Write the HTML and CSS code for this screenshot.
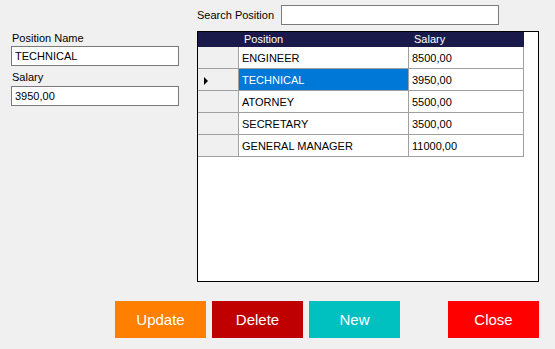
FILE: index.html
```html
<!DOCTYPE html>
<html lang="en">
<head>
  <meta charset="UTF-8">
  <title>Positions</title>
  <link rel="stylesheet" href="styles.css">
</head>
<body>
  <div class="main">
    <div class="edit-panel">
      <label class="field-label">Position Name</label>
      <input class="field" type="text" value="TECHNICAL">
      <label class="field-label">Salary</label>
      <input class="field" type="text" value="3950,00">
    </div>

    <div class="list-panel">
      <div class="search-row">
        <label class="search-label">Search Position</label>
        <input class="search-box" type="text">
      </div>

      <div class="grid">
        <table class="grid-table">
          <thead>
            <tr>
              <th class="row-head"></th>
              <th class="col-pos">Position</th>
              <th class="col-sal">Salary</th>
            </tr>
          </thead>
          <tbody>
            <tr>
              <td class="row-head"></td>
              <td>ENGINEER</td>
              <td>8500,00</td>
            </tr>
            <tr>
              <td class="row-head"><span class="arrow"></span></td>
              <td class="selected">TECHNICAL</td>
              <td>3950,00</td>
            </tr>
            <tr>
              <td class="row-head"></td>
              <td>ATORNEY</td>
              <td>5500,00</td>
            </tr>
            <tr>
              <td class="row-head"></td>
              <td>SECRETARY</td>
              <td>3500,00</td>
            </tr>
            <tr>
              <td class="row-head"></td>
              <td>GENERAL MANAGER</td>
              <td>11000,00</td>
            </tr>
          </tbody>
        </table>
      </div>
    </div>
  </div>

  <div class="buttons">
    <button class="btn btn-update">Update</button>
    <button class="btn btn-delete">Delete</button>
    <button class="btn btn-new">New</button>
    <button class="btn btn-close">Close</button>
  </div>
</body>
</html>
```

FILE: styles.css
```css
body {
  margin: 0;
  width: 555px;
  height: 349px;
  background: #f0f0f0;
  font-family: 'Liberation Sans', Arial, sans-serif;
  font-size: 11px;
  color: #000000;
  overflow: hidden;
}

.main {
  display: flex;
}

.edit-panel {
  display: flex;
  flex-direction: column;
  width: 168px;
  margin-left: 11px;
  padding-top: 31px;
}

.field-label {
  height: 14px;
  line-height: 14px;
  padding-left: 1px;
}

.field {
  box-sizing: border-box;
  width: 168px;
  height: 20px;
  margin: 1px 0 6px 0;
  padding: 0 3px;
  border: 1px solid #7a7a7a;
  background: #ffffff;
  font-family: inherit;
  font-size: 11px;
}

.field + .field-label {
  margin-top: -2px;
  margin-bottom: 1px;
}

.list-panel {
  margin-left: 18px;
  padding-top: 5px;
}

.search-row {
  display: flex;
  align-items: center;
  height: 20px;
}

.search-label {
  width: 84px;
}

.search-box {
  box-sizing: border-box;
  width: 218px;
  height: 20px;
  margin: 0;
  border: 1px solid #7a7a7a;
  background: #ffffff;
}

.grid {
  box-sizing: border-box;
  width: 342px;
  height: 251px;
  margin-top: 6px;
  border: 1px solid #000000;
  background: #ffffff;
}

.grid-table {
  border-collapse: separate;
  border-spacing: 0;
  table-layout: fixed;
  width: 326px;
}

.grid-table th {
  height: 15px;
  padding: 0 5px;
  background: #191a4a;
  color: #ffffff;
  font-weight: normal;
  text-align: left;
  line-height: 15px;
}

.grid-table th.row-head {
  width: 31px;
}

.grid-table th.col-pos {
  width: 160px;
}

.grid-table td {
  box-sizing: border-box;
  height: 22px;
  padding: 0 3px;
  border-right: 1px solid #a0a0a0;
  border-bottom: 1px solid #a0a0a0;
  white-space: nowrap;
}

.grid-table td.row-head {
  background: #f0f0f0;
  border-bottom: 1px solid #a0a0a0;
  padding-left: 6px;
}

.grid-table td.selected {
  background: #0078d7;
  color: #ffffff;
}

.arrow {
  display: inline-block;
  width: 0;
  height: 0;
  border-top: 4px solid transparent;
  border-bottom: 4px solid transparent;
  border-left: 4px solid #000000;
  vertical-align: middle;
}

.buttons {
  display: flex;
  gap: 6px;
  margin-top: 19px;
  margin-left: 115px;
}

.btn {
  width: 91px;
  height: 37px;
  border: none;
  color: #ffffff;
  font-family: inherit;
  font-size: 15px;
}

.btn-update {
  background: #ff8000;
}

.btn-delete {
  background: #c00000;
}

.btn-new {
  background: #00c0c0;
}

.btn-close {
  margin-left: 42px;
  background: #ff0000;
}
```
